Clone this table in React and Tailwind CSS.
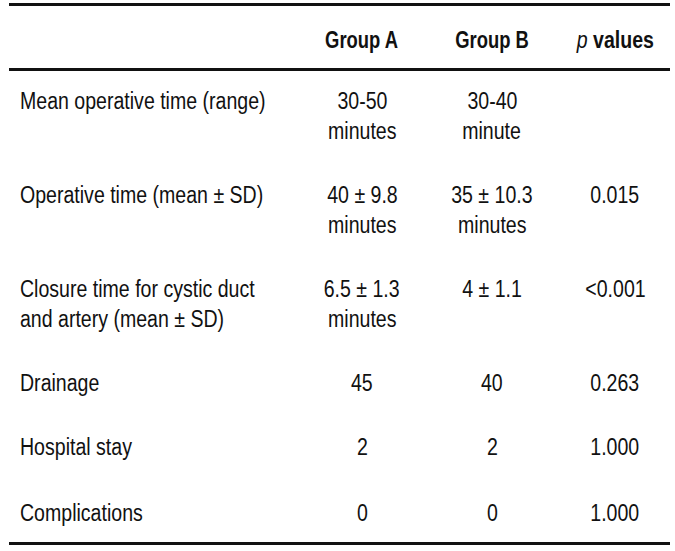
const rows = [
  { label: ['Mean operative time (range)'], a: ['30-50', 'minutes'], b: ['30-40', 'minute'], p: [] },
  { label: ['Operative time (mean ± SD)'], a: ['40 ± 9.8', 'minutes'], b: ['35 ± 10.3', 'minutes'], p: ['0.015'] },
  { label: ['Closure time for cystic duct', 'and artery (mean ± SD)'], a: ['6.5 ± 1.3', 'minutes'], b: ['4 ± 1.1'], p: ['<0.001'] },
  { label: ['Drainage'], a: ['45'], b: ['40'], p: ['0.263'] },
  { label: ['Hospital stay'], a: ['2'], b: ['2'], p: ['1.000'] },
  { label: ['Complications'], a: ['0'], b: ['0'], p: ['1.000'] },
]

// condensed look: Liberation Sans squeezed horizontally
function Lines({ items, left }) {
  return items.map((t, i) => (
    <div key={i} className="whitespace-nowrap">
      <span className={`inline-block scale-x-[0.85] ${left ? 'origin-left' : 'origin-center'}`}>{t}</span>
    </div>
  ))
}

export default function App() {
  return (
    <div
      className="w-[675px] h-[551px] bg-white pt-[3px] pl-[9px] text-[#111] text-[23px] leading-[30px]"
      style={{ fontFamily: '"Liberation Sans", Arial, sans-serif' }}
    >
      <div className="w-[661px] border-t-[3px] border-b-[3px] border-[#111]">
        {/* header */}
        <div className="grid grid-cols-[291px_124px_136px_1fr] pt-[19px] pb-[13px] border-b-[3px] border-[#111] font-bold">
          <div />
          <div className="text-center whitespace-nowrap">
            <span className="inline-block scale-x-[0.8]">Group A</span>
          </div>
          <div className="text-center whitespace-nowrap">
            <span className="inline-block scale-x-[0.8]">Group B</span>
          </div>
          <div className="text-center whitespace-nowrap">
            <span className="inline-block scale-x-[0.85]">
              <span className="italic font-normal">p</span> values
            </span>
          </div>
        </div>

        {/* body */}
        {rows.map((r, i) => (
          <div
            key={i}
            className={`grid grid-cols-[291px_124px_136px_1fr] ${
              i === 0 ? 'pt-[15px] pb-[17px]' : i === rows.length - 1 ? 'pt-[19px] pb-[14px]' : 'py-[17px]'
            }`}
          >
            <div className="pl-[11px]">
              <Lines items={r.label} left />
            </div>
            <div className="text-center">
              <Lines items={r.a} />
            </div>
            <div className="text-center">
              <Lines items={r.b} />
            </div>
            <div className="text-center">
              <Lines items={r.p} />
            </div>
          </div>
        ))}
      </div>
    </div>
  )
}
